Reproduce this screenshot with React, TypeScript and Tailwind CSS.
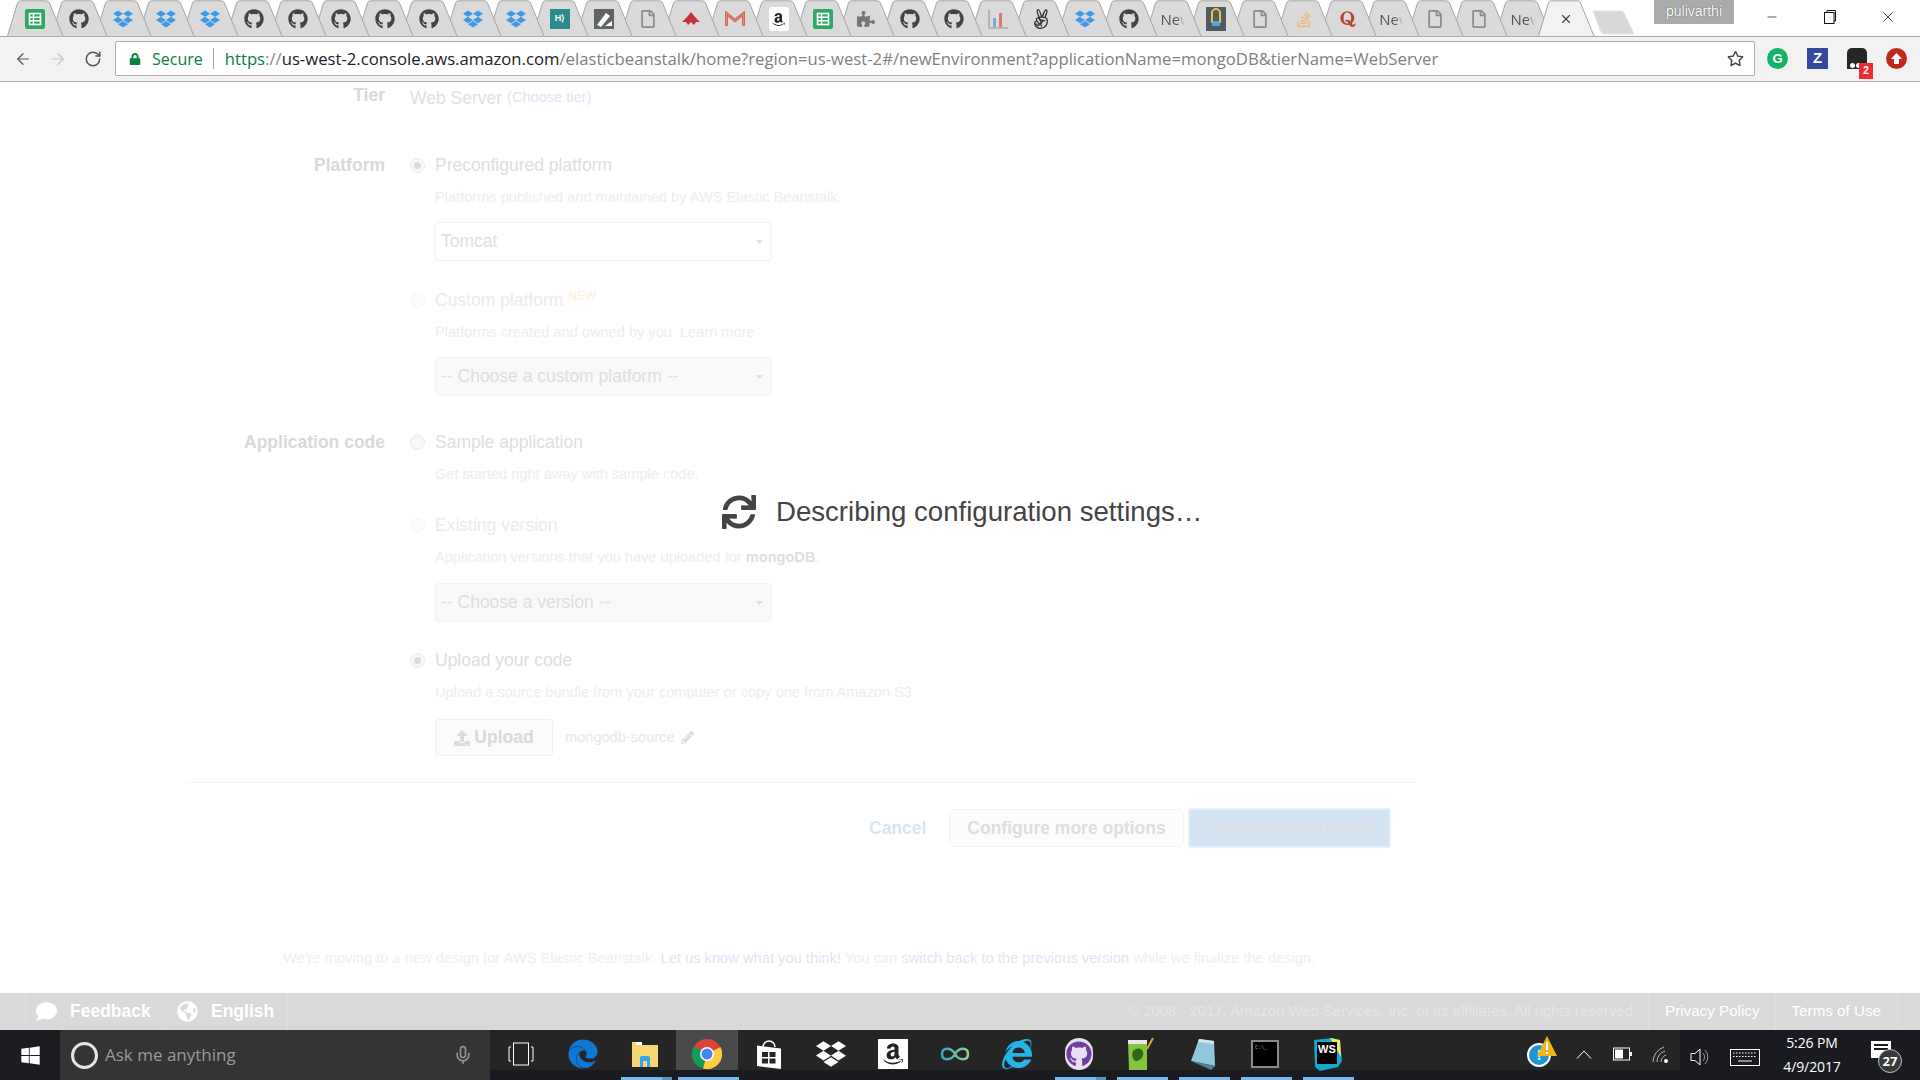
import React from "react";
import { FaGithub, FaDropbox, FaAmazon, FaPuzzlePiece, FaAngellist, FaStackOverflow, FaQuora, FaRegFile, FaSync, FaRegStar, FaWindows, FaEdge, FaInternetExplorer, FaGlobeAmericas, FaComment, FaUpload, FaPencilAlt, FaLock, FaCaretDown } from "react-icons/fa";
import { ArrowLeft, ArrowRight, RotateCw, Mic, Minus, X } from "lucide-react";

const Sheets = () => (
  <svg width="20" height="20" viewBox="0 0 20 20"><rect width="20" height="20" rx="2" fill="#2fa866" /><rect x="4.5" y="4.5" width="11" height="11" fill="none" stroke="#fff" strokeWidth="1.6" /><path d="M4.5 8.2h11M4.5 11.8h11M8.5 4.5v11" stroke="#fff" strokeWidth="1.4" /></svg>
);
const Doc = () => <FaRegFile size={18} color="#8a8a8a" />;
const Hk = () => (
  <div className="w-5 h-5 bg-[#2b8a8c] text-white text-[9px] font-bold flex items-center justify-center font-['Liberation_Sans',sans-serif]">H⟩</div>
);
const Pen = () => (
  <svg width="20" height="20" viewBox="0 0 20 20"><rect width="20" height="20" fill="#5f6566" /><path d="M3 16 L12 4 L16 7 L7 18 Z" fill="#fff" /><path d="M11 17 L18 17 L18 12Z" fill="#fff" /></svg>
);
const RedApp = () => (
  <svg width="20" height="16" viewBox="0 0 20 16"><path d="M10 1 L14 6 L19 11 L15 11 L13 14 L10 11 L7 14 L5 11 L1 11 L6 6Z" fill="#c8323c" /></svg>
);
const Gmail = () => (
  <svg width="20" height="16" viewBox="0 0 20 16"><path d="M1.5 15V2.5L10 9.5L18.5 2.5V15" fill="none" stroke="#d9645a" strokeWidth="3" /><path d="M1.5 15V2.5L10 9.5L18.5 2.5V15" fill="none" stroke="#e0a8a0" strokeWidth="0.6" /></svg>
);
const Amazon = () => (
  <div className="w-5 h-6 rounded-[3px] bg-white flex items-center justify-center"><FaAmazon size={15} color="#222" /></div>
);
const Chart = () => (
  <svg width="20" height="20" viewBox="0 0 20 20"><path d="M1 1v18h19" fill="none" stroke="#a9a9a9" strokeWidth="1.5" /><rect x="5" y="9" width="3" height="9" fill="#7ea7d3" /><rect x="11" y="4" width="3" height="14" fill="#d87a6f" /></svg>
);
const Yellow = () => (
  <svg width="20" height="24" viewBox="0 0 20 24"><rect width="20" height="24" fill="#4e5a66" /><path d="M6 6a4 4 0 0 1 8 0v9H6Z" fill="none" stroke="#f2c230" strokeWidth="2" /><rect x="6" y="14" width="8" height="5" fill="#56a6d8" /></svg>
);
const NewT = () => (
  <span className="block w-[24px] overflow-hidden text-[15px] leading-none text-[#555] font-['Open_Sans',sans-serif] [mask-image:linear-gradient(to_right,black_65%,transparent)]">New</span>
);
const gh = <FaGithub size={20} color="#444" />;
const db = <FaDropbox size={20} color="#3d9ae8" />;

const tabs: React.ReactNode[] = [
  <Sheets />, gh, db, db, db, gh, gh, gh, gh, gh, db, db, <Hk />, <Pen />, <Doc />, <RedApp />, <Gmail />, <Amazon />, <Sheets />,
  <FaPuzzlePiece size={18} color="#777" />, gh, gh, <Chart />, <FaAngellist size={20} color="#333" />, db, gh, <NewT />, <Yellow />, <Doc />,
  <FaStackOverflow size={18} color="#f0b87c" />, <FaQuora size={18} color="#b5462c" />, <NewT />, <Doc />, <Doc />, <NewT />,
  <X size={14} color="#444" strokeWidth={2} />,
];

function Tab({ icon, index, active }: { icon: React.ReactNode; index: number; active: boolean }) {
  return (
    <div className="relative w-[58px] h-[36px] shrink-0 -mr-[14.25px] flex items-center justify-center" style={{ zIndex: active ? 100 : 60 - index }}>
      <svg className="absolute inset-0" width="58" height="36" viewBox="0 0 58 36">
        <path d="M0.5 36 L10.5 3 Q11.3 0.8 13.5 0.8 L39 0.8 Q41.5 0.8 42.5 3 L56 36" fill={active ? "#f2f2f2" : "#dadada"} stroke="#a6a6a6" strokeWidth="1" />
      </svg>
      <div className="relative mt-[2px] -ml-[2px] flex items-center justify-center">{icon}</div>
    </div>
  );
}

function TabStrip() {
  return (
    <div className="relative h-[36px] bg-white flex items-start pl-[7px] border-b border-[#a9a9a9] box-content shrink-0 overflow-hidden -mb-[1px]">
      {tabs.map((t, i) => <Tab key={i} icon={t} index={i} active={i === 35} />)}
      <div className="relative ml-[10px] mt-[10px] w-[44px] h-[26px] z-10">
        <svg width="44" height="26" viewBox="0 0 44 26"><path d="M1 1 H29 Q31 1 32 3 L42 24 H12 Q10 24 9 22 Z" fill="#d8d8d8" stroke="#e4e4e4" /></svg>
      </div>
      <div className="absolute left-[1654px] top-0 w-[80px] h-[24px] bg-[#ababab] text-white text-[14px] leading-[22px] text-center font-['Liberation_Sans',sans-serif] [text-shadow:0_0_1px_#333] z-20">pulivarthi</div>
      <div className="absolute right-[3px] top-0 h-[34px] w-[174px] flex items-center z-20">
        <div className="w-[58px] flex justify-center"><Minus size={14} color="#111" strokeWidth={1.2} /></div>
        <div className="w-[58px] flex justify-center">
          <svg width="12" height="14" viewBox="0 0 12 14"><rect x="0.5" y="2.5" width="9.5" height="11" fill="#fff" stroke="#111" /><path d="M3 2.5V0.5H11.5V11H10" fill="none" stroke="#111" /></svg>
        </div>
        <div className="w-[58px] flex justify-center"><X size={18} color="#111" strokeWidth={1} /></div>
      </div>
    </div>
  );
}

function Toolbar() {
  return (
    <div className="h-[45px] bg-[#f2f2f2] border-b border-[#b0b0b0] flex items-center shrink-0 box-content">
      <div className="w-[115px] flex items-center pl-[14px] gap-[17px]">
        <ArrowLeft size={18} color="#555" strokeWidth={1.6} />
        <ArrowRight size={18} color="#c4c4c4" strokeWidth={1.6} />
        <RotateCw size={18} color="#555" strokeWidth={2} />
      </div>
      <div className="w-[1640px] h-[35px] bg-white border border-[#ababab] rounded-[2px] flex items-center font-['Open_Sans',sans-serif] text-[16.7px] whitespace-nowrap">
        <FaLock size={12} color="#0b8043" className="ml-[13px]" />
        <span className="ml-[11px] text-[#0b8043] text-[16px]">Secure</span>
        <span className="ml-[10px] w-px h-[21px] bg-[#a0a0a0]" />
        <span className="ml-[11px]">
          <span className="text-[#0b8043]">https</span><span className="text-[#888]">://</span><span className="text-[#222]">us-west-2.console.aws.amazon.com</span><span className="text-[#808080]">/elasticbeanstalk/home?region=us-west-2#/newEnvironment?applicationName=mongoDB&amp;tierName=WebServer</span>
        </span>
        <FaRegStar size={17} color="#444" className="ml-auto mr-[10px]" />
      </div>
      <div className="flex-1 flex items-center pl-[12px] gap-[19px]">
        <div className="w-[21px] h-[21px] rounded-full bg-[#17b26a] flex items-center justify-center text-white text-[13px] font-bold font-['Liberation_Sans',sans-serif]">G</div>
        <div className="w-[21px] h-[21px] bg-[#34489c] flex items-center justify-center text-white text-[15px] font-bold font-['Liberation_Sans',sans-serif]">Z</div>
        <div className="relative w-[20px] h-[21px] rounded-t-[5px] bg-[#262626]">
          <div className="absolute left-[3px] bottom-[1px] w-[5px] h-[5px] rounded-full bg-white" />
          <div className="absolute left-[9px] bottom-[1px] w-[5px] h-[5px] rounded-full bg-white" />
          <div className="absolute left-[12px] top-[15px] w-[14px] h-[16px] bg-[#ee2b32] text-white text-[10px] leading-[16px] text-center font-bold font-['Liberation_Sans',sans-serif]">2</div>
        </div>
        <div className="w-[21px] h-[21px] rounded-full bg-[#c0281e] flex items-center justify-center">
          <svg width="13" height="13" viewBox="0 0 13 13"><path d="M6.5 1 L12 7 H9 V12 H4 V7 H1Z" fill="#fff" /></svg>
        </div>
      </div>
    </div>
  );
}

function Radio({ on, faint }: { on?: boolean; faint?: boolean }) {
  return (
    <span className={`w-[15px] h-[15px] rounded-full border shrink-0 flex items-center justify-center ${faint ? "border-[#f5f5f5] bg-[#fbfbfb]" : "border-[#eaeaea] bg-[#f8f8f8]"}`}>
      {on && <span className="w-[7px] h-[7px] rounded-full bg-[#dcdcdc]" />}
    </span>
  );
}

function Choice({ on, faint, top, children }: { on?: boolean; faint?: boolean; top: string; children: React.ReactNode }) {
  return (
    <div className={`flex items-center h-[20px] gap-[10px] text-[17.5px] ${faint ? "text-[#ececec]" : "text-[#dedede]"} ${top}`}>
      <Radio on={on} faint={faint} />
      <span className="whitespace-nowrap">{children}</span>
    </div>
  );
}

function Sub({ children, top = "mt-[12px]" }: { children: React.ReactNode; top?: string }) {
  return <div className={`ml-[25px] h-[20px] leading-[20px] text-[14.6px] text-[#eeeeee] whitespace-nowrap ${top}`}>{children}</div>;
}

function Select({ text, top, disabled }: { text: string; top: string; disabled?: boolean }) {
  return (
    <div className={`ml-[25px] w-[337px] h-[39px] rounded-[3px] border border-[#f3f3f3] flex items-center justify-between pl-[5px] pr-[6px] text-[17.5px] text-[#dfdfdf] ${disabled ? "bg-[#f9f9f9]" : "bg-white"} ${top}`}>
      <span>{text}</span>
      <FaCaretDown size={11} color="#dcdcdc" />
    </div>
  );
}

function Label({ children }: { children: React.ReactNode }) {
  return <div className="w-[198px] text-right text-[17.5px] font-bold leading-[20px] text-[#d9d9d9] shrink-0">{children}</div>;
}

function Form() {
  return (
    <div className="ml-[187px] w-[1230px] font-['Liberation_Sans',sans-serif]">
      <div className="flex pt-[3px]">
        <Label>Tier</Label>
        <div className="ml-[25px] h-[20px] mt-[3px] flex items-center gap-[5px] whitespace-nowrap">
          <span className="text-[17.5px] text-[#e0e0e0]">Web Server</span>
          <span className="text-[14.6px] text-[#dfe6f5]">(Choose tier)</span>
        </div>
      </div>

      <div className="flex mt-[47px]">
        <Label>Platform</Label>
        <div className="ml-[25px]">
          <Choice on top="">Preconfigured platform</Choice>
          <Sub>Platforms published and maintained by AWS Elastic Beanstalk.</Sub>
          <Select text="Tomcat" top="mt-[15px]" />
          <Choice faint top="mt-[29px]">Custom platform <sup className="text-[12px] text-[#ffeedd]">NEW</sup></Choice>
          <Sub>Platforms created and owned by you. Learn more</Sub>
          <Select text="-- Choose a custom platform --" top="mt-[15px]" disabled />
        </div>
      </div>

      <div className="flex mt-[36px]">
        <Label>Application code</Label>
        <div className="ml-[25px]">
          <Choice top="">Sample application</Choice>
          <Sub>Get started right away with sample code.</Sub>
          <Choice faint top="mt-[31px]">Existing version</Choice>
          <Sub>Application versions that you have uploaded for <b className="font-bold text-[#dfdfdf]">mongoDB</b>.</Sub>
          <Select text="-- Choose a version --" top="mt-[16px]" disabled />
          <Choice on top="mt-[28px]">Upload your code</Choice>
          <Sub>Upload a source bundle from your computer or copy one from Amazon S3.</Sub>
          <div className="ml-[25px] mt-[17px] flex items-center">
            <div className="w-[118px] h-[37px] rounded-[3px] border border-[#f2f2f2] bg-[#fbfbfb] flex items-center justify-center gap-[4px] text-[17.5px] font-bold text-[#d9d9d9]">
              <FaUpload size={16} color="#dddddd" />
              <span>Upload</span>
            </div>
            <span className="ml-[12px] text-[14.6px] text-[#e8e8e8]">mongodb-source</span>
            <FaPencilAlt size={13} color="#dcdcdc" className="ml-[6px]" />
          </div>
        </div>
      </div>

      <div className="mt-[26px] border-t border-[#f3f3f3]" />

      <div className="mt-[25px] flex items-center text-[17.5px] font-bold">
        <span className="ml-[682px] w-[57px] text-[#d8e5f5]">Cancel</span>
        <div className="ml-[23px] w-[235px] h-[38px] rounded-[5px] border border-[#f2f2f2] bg-[#fcfcfc] flex items-center justify-center text-[#e0dede]">Configure more options</div>
        <div className="ml-[4px] w-[203px] h-[40px] rounded-[3px] border-2 border-[#e6f0fb] bg-[#d3e3f4] flex items-center justify-center text-[#dcdfe3]">Create environment</div>
      </div>

      <div className="mt-[100px] h-[20px] leading-[20px] ml-[96px] text-[14.7px] text-[#f0eff1] whitespace-nowrap">
        We're moving to a new design for AWS Elastic Beanstalk. <span className="text-[#dfe6f5]">Let us know what you think!</span> You can <span className="text-[#dfe6f5]">switch back to the previous version</span> while we finalize the design.
      </div>
    </div>
  );
}

function Footer() {
  return (
    <div className="h-[37px] bg-[#d9d9d9] flex items-stretch font-['Liberation_Sans',sans-serif] shrink-0 mt-auto">
      <div className="ml-[25px] w-[141px] border-x border-[#dfdfdf] flex items-center pl-[10px] gap-[13px] text-white font-bold text-[17.5px]">
        <FaComment size={21} color="#fff" /> <span>Feedback</span>
      </div>
      <div className="w-[122px] border-r border-[#dfdfdf] flex items-center pl-[11px] gap-[13px] text-white font-bold text-[17.5px]">
        <FaGlobeAmericas size={21} color="#fff" /> <span>English</span>
      </div>
      <div className="ml-auto flex items-center text-[15.2px]">
        <span className="text-[#e4e4e4] pr-[11px] text-[14.85px]">© 2008 - 2017, Amazon Web Services, Inc. or its affiliates. All rights reserved.</span>
        <span className="h-full flex items-center border-l border-[#dfdfdf] pl-[16px] pr-[15px] text-white">Privacy Policy</span>
        <span className="h-full flex items-center border-x border-[#dfdfdf] px-[16px] text-white mr-[22px]">Terms of Use</span>
      </div>
    </div>
  );
}

const Chrome = () => (
  <svg width="30" height="30" viewBox="0 0 30 30">
    <circle cx="15" cy="15" r="15" fill="#db4437" />
    <path d="M15 15 L2 7.5 A15 15 0 0 0 11 29.5 Z" fill="#0f9d58" />
    <path d="M15 15 L28.4 8 A15 15 0 0 1 11 29.5 Z" fill="#ffcd40" />
    <circle cx="15" cy="15" r="7" fill="#fff" />
    <circle cx="15" cy="15" r="5.5" fill="#4285f4" />
  </svg>
);
const Explorer = () => (
  <svg width="28" height="28" viewBox="0 0 28 28"><path d="M1 2h8l2 3h16v22H1Z" fill="#f7d774" /><path d="M5 2h6v3H5z" fill="#fff" /><path d="M9 27V18a2 2 0 0 1 2-2h6a2 2 0 0 1 2 2v9h-3v-5h-4v5z" fill="#34a5e8" /><rect x="12" y="21" width="4" height="6" fill="#f7d774" /></svg>
);
const Store = () => (
  <svg width="26" height="30" viewBox="0 0 26 30"><path d="M7 8a6 6 0 0 1 12 0" fill="none" stroke="#fff" strokeWidth="1.5" /><path d="M1 6.5L25 9.5V30L1 27Z" fill="#fff" /><path d="M6 13h6v5H6zM13.5 13h6v5h-6zM6 19.5h6v5H6zM13.5 19.5h6v5h-6z" fill="#262626" /></svg>
);
const Inf = () => (
  <svg width="30" height="18" viewBox="0 0 30 18"><path d="M15 9 C11 2 2 2 2 9 C2 16 11 16 15 9 C19 2 28 2 28 9 C28 16 19 16 15 9Z" fill="none" stroke="url(#ig)" strokeWidth="2.5" /><defs><linearGradient id="ig" x1="0" x2="1"><stop stopColor="#36a6bf" /><stop offset="1" stopColor="#8fd08a" /></linearGradient></defs></svg>
);
const GhDesk = () => (
  <div className="w-[28px] h-[32px] rounded-full bg-[#e8e0f2] flex items-center justify-center"><FaGithub size={26} color="#6e3fa0" /></div>
);
const Npp = () => (
  <svg width="28" height="34" viewBox="0 0 28 34"><path d="M1 3H20V33H2Z" fill="#86c440" /><path d="M1 3H20V7H1Z" fill="#e8e8e8" /><path d="M6 14c4-4 9-3 10 1s-2 8-6 9-6-6-4-10Z" fill="#2c6a1a" /><path d="M20 12L26 1" stroke="#d9a82a" strokeWidth="2" /></svg>
);
const Notepad = () => (
  <svg width="26" height="32" viewBox="0 0 26 32"><path d="M9 1L24 3L25 28L1 23Z" fill="#8fc8dc" /><path d="M9 1L24 3V6L8 4Z" fill="#d7e3ea" /><path d="M25 28L21 32L1 23Z" fill="#4f8096" /></svg>
);
const Cmd = () => (
  <div className="w-[28px] h-[28px] bg-black border-2 border-[#8a8a8a] text-[5px] leading-none text-[#aaa] pl-[2px] pt-[4px] font-['Liberation_Mono',monospace]">C:\_</div>
);
const Ws = () => (
  <div className="relative w-[30px] h-[34px]">
    <svg className="absolute inset-0" width="30" height="34" viewBox="0 0 30 34"><path d="M2 3L20 1L28 3L30 24L26 30L8 34L3 30Z" fill="#14a9cc" /><path d="M18 1L28 3L29 20Z" fill="#f2e65c" /></svg>
    <div className="absolute left-[5px] top-[5px] w-[20px] h-[22px] bg-black text-white text-[11px] font-bold leading-[14px] pl-[1px] font-['Liberation_Sans',sans-serif]">WS</div>
  </div>
);

function TaskIcon({ children, active }: { children: React.ReactNode; active?: boolean }) {
  return (
    <div className={`w-[62px] h-[40px] flex items-center justify-center shrink-0 ${active ? "bg-[#4a4a4a]" : ""}`}>
      <div className="mt-[8px] flex items-center justify-center">{children}</div>
    </div>
  );
}

const Bar = ({ left, w, dark }: { left: number; w: number; dark?: boolean }) => (
  <div className="h-[3px] bg-[#76b9ed] shrink-0" style={{ marginLeft: left, width: w }}>
    {dark && <div className="ml-auto w-[10px] h-full bg-[#5d93bd]" />}
  </div>
);

function Taskbar() {
  return (
    <div className="h-[50px] bg-[#191b20] flex items-stretch shrink-0 font-['Open_Sans',sans-serif]">
      <div className="w-[60px] bg-[#1c1d21] flex items-center justify-center"><FaWindows size={21} color="#fff" /></div>
      <div className="w-[430px] bg-[#343434] flex items-center pl-[11px] pr-[17px]">
        <div className="w-[27px] h-[27px] rounded-full border-[3px] border-[#e4e4e4]" />
        <span className="ml-[7px] text-[17px] text-[#9a9a9a]">Ask me anything</span>
        <Mic size={20} color="#8f8f8f" className="ml-auto" />
      </div>
      <div className="w-[1190px] flex flex-col">
        <div className="h-[40px] bg-[#252525] flex items-center">
          <TaskIcon>
            <svg width="26" height="24" viewBox="0 0 26 24"><rect x="5.5" y="1" width="15" height="22" fill="none" stroke="#fff" /><path d="M3 5H1V19H3M23 5H25V19H23" fill="none" stroke="#fff" /></svg>
          </TaskIcon>
          <TaskIcon><FaEdge size={30} color="#0e78d5" /></TaskIcon>
          <TaskIcon><Explorer /></TaskIcon>
          <TaskIcon active><Chrome /></TaskIcon>
          <TaskIcon><Store /></TaskIcon>
          <TaskIcon><FaDropbox size={30} color="#fff" /></TaskIcon>
          <TaskIcon><div className="w-[30px] h-[30px] bg-white flex items-center justify-center"><FaAmazon size={24} color="#222" /></div></TaskIcon>
          <TaskIcon><Inf /></TaskIcon>
          <TaskIcon><FaInternetExplorer size={30} color="#25b3e8" /></TaskIcon>
          <TaskIcon><GhDesk /></TaskIcon>
          <TaskIcon><Npp /></TaskIcon>
          <TaskIcon><Notepad /></TaskIcon>
          <TaskIcon><Cmd /></TaskIcon>
          <TaskIcon><Ws /></TaskIcon>
          <div className="ml-auto mt-[8px] flex items-center gap-[20px] pr-[10px]">
            <div className="relative w-[24px] h-[26px] mr-[5px]">
              <div className="absolute left-0 top-[2px] w-[24px] h-[24px] rounded-full bg-[#1d96d3] border-2 border-white text-white text-[14px] font-bold leading-[20px] text-center font-['Liberation_Sans',sans-serif]">!</div>
              <svg className="absolute left-[9px] -top-[6px]" width="22" height="22" viewBox="0 0 22 22"><path d="M11 1L21 21H1Z" fill="#f5b21f" /><path d="M11 7V15M11 17V19" stroke="#fff" strokeWidth="2" /></svg>
            </div>
            <svg width="16" height="9" viewBox="0 0 16 9"><path d="M1 8.5L8 1L15 8.5" fill="none" stroke="#fff" /></svg>
            <svg width="20" height="14" viewBox="0 0 20 14"><rect x="1.5" y="1" width="16" height="12" fill="none" stroke="#fff" /><rect x="3" y="2.5" width="8" height="9" fill="#fff" /><rect x="18" y="5" width="2" height="4" fill="#fff" /></svg>
            <svg width="18" height="18" viewBox="0 0 18 18"><path d="M1 17A16 16 0 0 1 12 2M5 17A12 12 0 0 1 13 6M9 17A8 8 0 0 1 14 10" fill="none" stroke="#bbb" /><circle cx="14" cy="16" r="2" fill="#fff" /></svg>
          </div>
        </div>
        <div className="h-[10px] flex items-end">
          <Bar left={131} w={51} dark />
          <Bar left={6} w={61} />
          <Bar left={316} w={51} dark />
          <Bar left={11} w={51} />
          <Bar left={11} w={51} />
          <Bar left={11} w={51} />
          <Bar left={11} w={51} />
        </div>
      </div>
      <div className="flex-1 flex items-center pl-[10px] text-white">
        <svg className="mt-[4px]" width="20" height="20" viewBox="0 0 20 20"><path d="M1 6.5H5L10 2V18L5 13.5H1Z" fill="none" stroke="#fff" /><path d="M13 6a6 6 0 0 1 0 8M15 3a10 10 0 0 1 0 14" fill="none" stroke="#999" /></svg>
        <svg className="ml-[20px] mt-[4px]" width="30" height="17" viewBox="0 0 30 17"><rect x="0.5" y="0.5" width="29" height="16" fill="none" stroke="#fff" /><path d="M3 4h24M3 7.5h24" stroke="#fff" strokeDasharray="1.5 1.5" /><path d="M8 12h14" stroke="#fff" /></svg>
        <div className="ml-[16px] w-[72px] text-center text-[14px] leading-[24px] tracking-[-0.1px]">
          <div>5:26 PM</div>
          <div>4/9/2017</div>
        </div>
        <div className="relative ml-[23px] -mt-[12px] w-[20px] h-[17px] bg-white">
          <div className="mt-[3px] mx-[3px] h-[2px] bg-[#191b20]" />
          <div className="mt-[2px] mx-[3px] h-[2px] bg-[#191b20]" />
          <div className="absolute left-[7px] top-[8px] w-[24px] h-[24px] rounded-full bg-[#3a3a3a] border border-[#bbb] text-white text-[13px] font-bold leading-[22px] text-center">27</div>
        </div>
      </div>
    </div>
  );
}

export default function App() {
  return (
    <div className="w-[1920px] h-[1080px] bg-white flex flex-col overflow-hidden">
      <TabStrip />
      <Toolbar />
      <div className="relative flex-1 flex flex-col min-h-0">
        <Form />
        <Footer />
        <div className="absolute left-[722px] top-[412px] flex items-center gap-[20px] font-['Liberation_Sans',sans-serif] text-[#444] text-[27.6px] leading-[36px] whitespace-nowrap">
          <FaSync size={34} color="#444" />
          <span>Describing configuration settings…</span>
        </div>
      </div>
      <Taskbar />
    </div>
  );
}
